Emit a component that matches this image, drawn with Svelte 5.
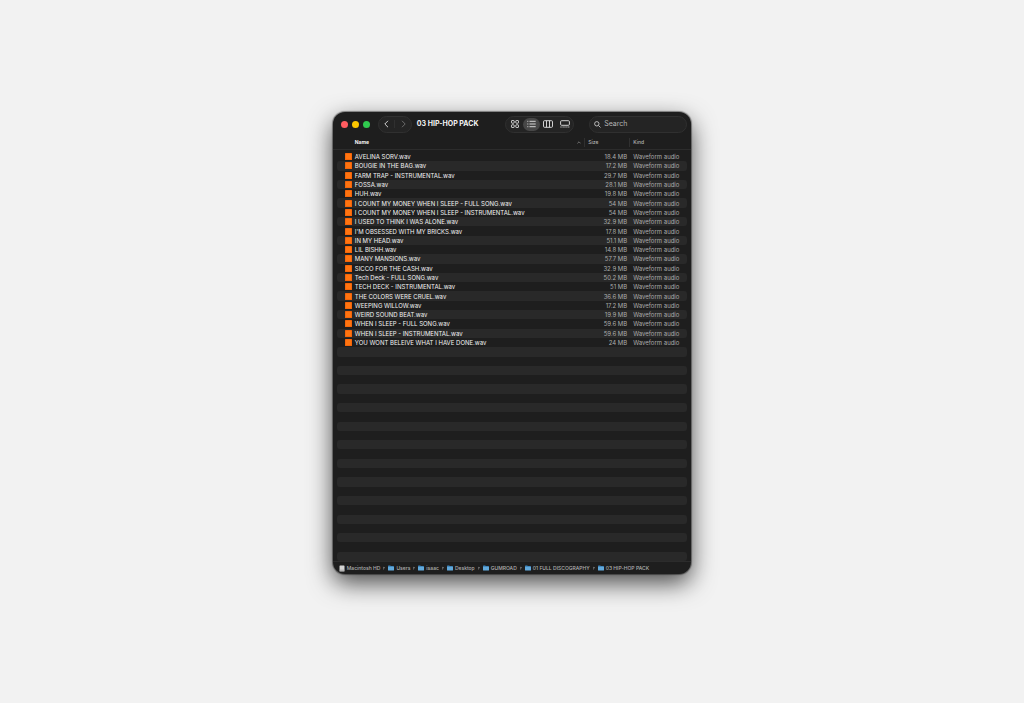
<script lang="ts">
  interface AudioFile {
    name: string;
    size: string;
  }

  const files: AudioFile[] = [
    { name: 'AVELINA SORV.wav', size: '18.4 MB' },
    { name: 'BOUGIE IN THE BAG.wav', size: '17.2 MB' },
    { name: 'FARM TRAP - INSTRUMENTAL.wav', size: '29.7 MB' },
    { name: 'FOSSA.wav', size: '28.1 MB' },
    { name: 'HUH.wav', size: '19.8 MB' },
    { name: 'I COUNT MY MONEY WHEN I SLEEP - FULL SONG.wav', size: '54 MB' },
    { name: 'I COUNT MY MONEY WHEN I SLEEP - INSTRUMENTAL.wav', size: '54 MB' },
    { name: 'I USED TO THINK I WAS ALONE.wav', size: '32.9 MB' },
    { name: "I'M OBSESSED WITH MY BRICKS.wav", size: '17.8 MB' },
    { name: 'IN MY HEAD.wav', size: '51.1 MB' },
    { name: 'LIL BISHH.wav', size: '14.8 MB' },
    { name: 'MANY MANSIONS.wav', size: '57.7 MB' },
    { name: 'SICCO FOR THE CASH.wav', size: '32.9 MB' },
    { name: 'Tech Deck - FULL SONG.wav', size: '50.2 MB' },
    { name: 'TECH DECK - INSTRUMENTAL.wav', size: '51 MB' },
    { name: 'THE COLORS WERE CRUEL.wav', size: '36.6 MB' },
    { name: 'WEEPING WILLOW.wav', size: '17.2 MB' },
    { name: 'WEIRD SOUND BEAT.wav', size: '19.9 MB' },
    { name: 'WHEN I SLEEP - FULL SONG.wav', size: '59.6 MB' },
    { name: 'WHEN I SLEEP - INSTRUMENTAL.wav', size: '59.6 MB' },
    { name: 'YOU WONT BELEIVE WHAT I HAVE DONE.wav', size: '24 MB' }
  ];

  const path = ['Macintosh HD', 'Users', 'isaac', 'Desktop', 'GUMROAD', '01 FULL DISCOGRAPHY', '03 HIP-HOP PACK'];
  const views = ['icons', 'list', 'columns', 'gallery'];

  // Stripes carry on below the last file
  const visibleRows = 44;
  const emptyRows = Array.from({ length: visibleRows - files.length });

  let view = $state('list');
  let query = $state('');
</script>

<main class="desktop">
  <section class="window" aria-label="03 HIP-HOP PACK">
    <header class="toolbar">
      <div class="lights">
        <button class="light close" aria-label="Close"></button>
        <button class="light minimize" aria-label="Minimize"></button>
        <button class="light zoom" aria-label="Zoom"></button>
      </div>

      <div class="pill nav">
        <button aria-label="Back">
          <svg width="5" height="8" viewBox="0 0 5 8"><path d="M4 .8.8 4 4 7.2" /></svg>
        </button>
        <button aria-label="Forward" disabled>
          <svg width="5" height="8" viewBox="0 0 5 8"><path d="M1 .8 4.2 4 1 7.2" /></svg>
        </button>
      </div>

      <h1>03 HIP-HOP PACK</h1>

      <div class="pill views">
        {#each views as item}
          <button class:active={view === item} aria-label="View as {item}" onclick={() => (view = item)}>
            {#if item === 'icons'}
              <svg width="8" height="8" viewBox="0 0 8 8">
                <rect x=".5" y=".5" width="2.7" height="2.7" rx=".6" />
                <rect x="4.8" y=".5" width="2.7" height="2.7" rx=".6" />
                <rect x=".5" y="4.8" width="2.7" height="2.7" rx=".6" />
                <rect x="4.8" y="4.8" width="2.7" height="2.7" rx=".6" />
              </svg>
            {:else if item === 'list'}
              <svg width="9" height="8" viewBox="0 0 9 8">
                <path d="M.3 1.3h1M.3 4h1M.3 6.7h1M2.5 1.3h6.2M2.5 4h6.2M2.5 6.7h6.2" />
              </svg>
            {:else if item === 'columns'}
              <svg width="10" height="8" viewBox="0 0 10 8">
                <rect x=".5" y=".7" width="9" height="6.6" rx="1" />
                <path d="M3.5.7v6.6M6.5.7v6.6" />
              </svg>
            {:else}
              <svg width="10" height="8" viewBox="0 0 10 8">
                <rect x=".6" y=".7" width="8.8" height="4.6" rx="1" />
                <path d="M.4 7h1.2M2.5 7h1.2M4.4 7h1.2M6.3 7h1.2M8.2 7h1.2" />
              </svg>
            {/if}
          </button>
        {/each}
      </div>

      <label class="pill search">
        <svg width="7" height="7" viewBox="0 0 7 7">
          <circle cx="2.8" cy="2.8" r="2.2" />
          <path d="m4.5 4.5 2 2" />
        </svg>
        <input type="text" placeholder="Search" aria-label="Search" bind:value={query} />
      </label>
    </header>

    <table>
      <thead>
        <tr>
          <th class="name" scope="col">
            Name
            <svg width="4" height="3" viewBox="0 0 4 3"><path d="m.4 2.4 1.6-1.6 1.6 1.6" /></svg>
          </th>
          <th scope="col">Size</th>
          <th scope="col">Kind</th>
        </tr>
      </thead>
      <tbody>
        {#each files as file}
          <tr>
            <td class="name">
              <svg width="7" height="7" viewBox="0 0 7 7">
                <rect width="7" height="7" rx=".5" fill="#f5650a" />
                <rect x="1" y="1" width="5" height="5" fill="#ff7410" />
              </svg>
              {file.name}
            </td>
            <td class="size">{file.size}</td>
            <td class="kind">Waveform audio</td>
          </tr>
        {/each}
        {#each emptyRows as _}
          <tr aria-hidden="true"><td></td></tr>
        {/each}
      </tbody>
    </table>

    <nav class="pathbar" aria-label="Path">
      {#each path as part, i}
        <a href="#{i}">
          {#if i === 0}
            <svg width="6" height="7" viewBox="0 0 6 7">
              <rect x=".5" y=".5" width="5" height="6" rx=".6" fill="#d4d4d4" />
              <path d="M.5 5.2h5" stroke="#8c8c8c" stroke-width=".6" />
            </svg>
          {:else}
            <svg width="6" height="6" viewBox="0 0 6 6">
              <path d="M0 1.1Q0 .5.6.5h1.6l.6.6h2.6q.6 0 .6.6V5H0Z" fill="#3f86bc" />
              <path d="M0 2h6v2.9q0 .6-.6.6H.6q-.6 0-.6-.6Z" fill="#62a9db" />
            </svg>
          {/if}
          {part}
        </a>
        {#if i < path.length - 1}
          <svg class="arrow" width="2" height="4" viewBox="0 0 2 4"><path d="m.2.8 1.2 1.2L.2 3.2" /></svg>
        {/if}
      {/each}
    </nav>
  </section>
</main>

<style>
  :global(body) {
    margin: 0;
    background: #f2f2f2;
  }

  .desktop {
    display: flex;
    align-items: center;
    justify-content: center;
    box-sizing: border-box;
    min-height: 100vh;
    padding-bottom: 17px;
    font-family: Inter, 'Liberation Sans', sans-serif;
  }

  .window {
    width: 35vw;
    min-width: 340px;
    overflow: hidden;
    color: #f4f4f4;
    background: #1e1e1e;
    border-radius: 12px;
    box-shadow:
      0 0 1px 1px rgba(0, 0, 0, 0.4),
      0 9px 24px rgba(0, 0, 0, 0.7);
  }

  button {
    display: flex;
    align-items: center;
    justify-content: center;
    padding: 0;
    background: none;
    border: 0;
  }

  svg {
    flex: none;
  }

  .toolbar {
    display: flex;
    align-items: center;
    height: 24px;
    padding: 0 4px 0 8px;
  }

  .lights {
    display: flex;
    gap: 4px;
  }

  .light {
    width: 7px;
    height: 7px;
    border-radius: 50%;
  }

  .close {
    background: #ff5c60;
  }

  .minimize {
    background: #fdc700;
  }

  .zoom {
    background: #30c94f;
  }

  .pill {
    display: flex;
    align-items: center;
    box-sizing: border-box;
    height: 17px;
    background: #242424;
    border: 1px solid #303030;
    border-radius: 9px;
  }

  .pill svg {
    fill: none;
    stroke: #e4e4e4;
    stroke-width: 0.9;
  }

  .nav {
    width: 34px;
    margin-left: 8px;
  }

  .nav button {
    flex: 1;
    height: 8px;
  }

  .nav button + button {
    border-left: 1px solid #303030;
  }

  .nav button:disabled svg {
    stroke: #747474;
  }

  h1 {
    margin: 0 auto 0 5px;
    font-size: 7px;
    font-weight: 700;
    line-height: 10px;
    white-space: nowrap;
  }

  .views {
    width: 69px;
    margin-right: 15px;
  }

  .views button {
    flex: 1;
    height: 13px;
    border-radius: 7px;
  }

  .views .active {
    background: #474747;
  }

  .search {
    gap: 3px;
    width: 98px;
    padding: 0 4px;
  }

  .search svg {
    stroke: #c8c8c8;
  }

  input {
    width: 100%;
    min-width: 0;
    padding: 0;
    font: 7px/10px Inter, 'Liberation Sans', sans-serif;
    color: #f4f4f4;
    background: none;
    border: 0;
    outline: none;
  }

  input::placeholder {
    color: #b4b4b4;
    opacity: 1;
  }

  table,
  thead {
    display: block;
  }

  thead {
    border-bottom: 1px solid #2c2c2c;
  }

  tr {
    display: grid;
    grid-template-columns: 1fr 45px 58px;
    align-items: center;
  }

  thead tr {
    height: 13px;
    padding: 0 4px;
  }

  th {
    box-sizing: border-box;
    padding: 0 3px;
    font-size: 5px;
    font-weight: 500;
    line-height: 9px;
    color: #b4b4b4;
    text-align: left;
    border-left: 1px solid #303030;
  }

  th.name {
    display: flex;
    align-items: center;
    justify-content: space-between;
    padding-left: 18px;
    font-weight: 700;
    color: #f4f4f4;
    border: 0;
  }

  th svg {
    fill: none;
    stroke: #a8a8a8;
    stroke-width: 0.6;
  }

  /* Rows share the height of the list evenly */
  tbody {
    display: grid;
    grid-auto-rows: 1fr;
    height: 409px;
    padding: 2px 4px 0;
  }

  tbody tr {
    min-height: 0;
    border-radius: 3px;
  }

  tbody tr:nth-child(even) {
    background: #292929;
  }

  td {
    padding: 0;
    font-size: 6px;
    line-height: 9px;
    white-space: nowrap;
  }

  td.name {
    display: flex;
    align-items: center;
    gap: 3px;
    padding-left: 8px;
  }

  .size,
  .kind {
    color: #acacac;
  }

  .size {
    padding-right: 2px;
    text-align: right;
  }

  .kind {
    padding-left: 4px;
  }

  .pathbar {
    display: flex;
    align-items: center;
    gap: 3px;
    height: 12px;
    padding: 0 6px;
    border-top: 1px solid #2c2c2c;
  }

  .pathbar a {
    display: flex;
    align-items: center;
    gap: 2px;
    font-size: 5px;
    font-weight: 500;
    line-height: 8px;
    color: #b0b0b0;
    text-decoration: none;
    white-space: nowrap;
  }

  .arrow {
    fill: none;
    stroke: #b0b0b0;
    stroke-width: 0.8;
  }
</style>
